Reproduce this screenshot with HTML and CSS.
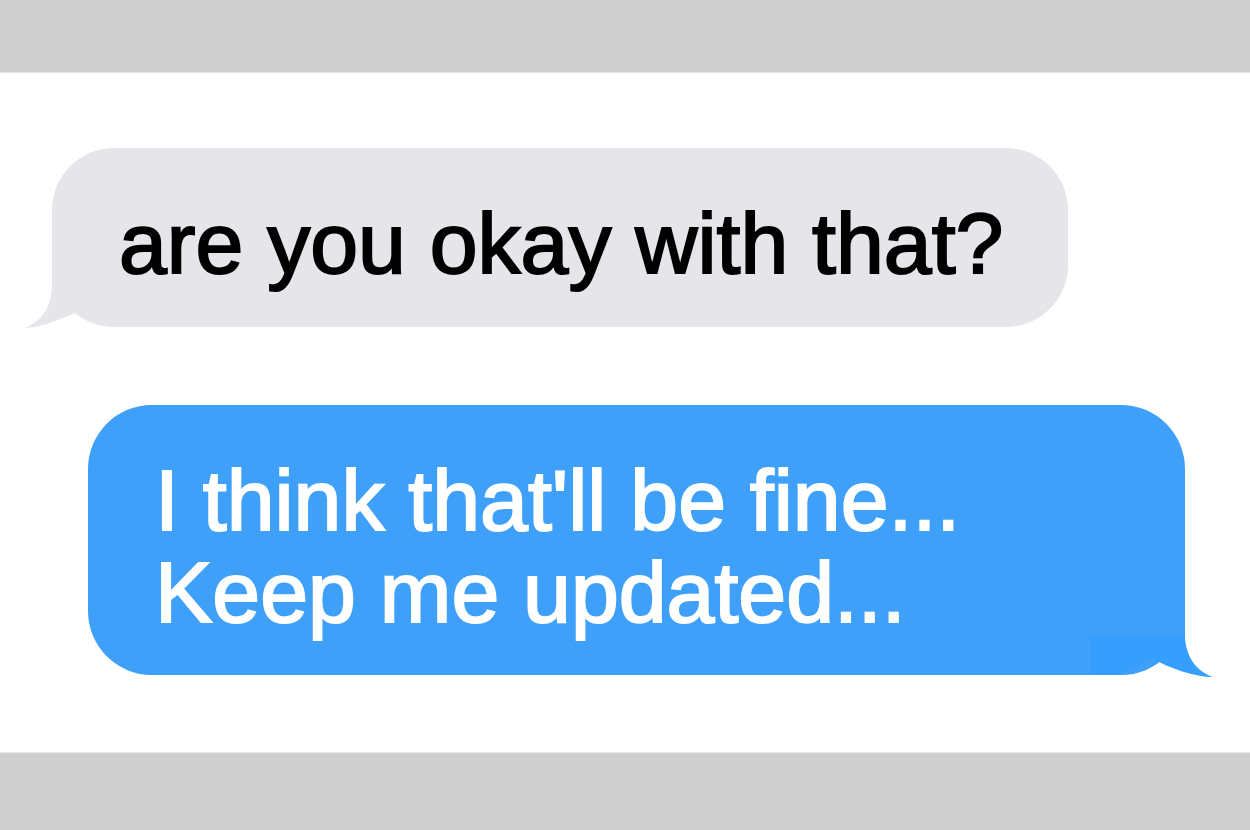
FILE: index.html
```html
<!DOCTYPE html>
<html lang="en">
<head>
    <meta charset="UTF-8">
    <title>Messages</title>
    <link rel="stylesheet" href="styles.css">
</head>
<body>
    <div class="bar bar-top"></div>
    <div class="thread">
        <div class="bubble received">
            are you okay with that?
            <svg class="tail tail-left" width="100" height="60" viewBox="0 0 100 60">
                <path d="M30 0 L30 13 C30 35 22 50 3 58 C20 58 40 48 66 38 C75 48 88 55 100 55 L100 0 Z" fill="#e5e5ea"/>
            </svg>
        </div>
        <div class="bubble sent">
            I think that'll be fine...<br>Keep me updated...
            <svg class="tail tail-right" width="130" height="69" viewBox="0 0 130 69">
                <rect x="0" y="0" width="95" height="27" fill="#3ea0f9"/>
                <path d="M0 26 L95 26 L95 28 C97 48 108 61 123 66 C105 66 80 58 60 46 C50 56 35 64 18 64 L0 64 Z" fill="#369efc"/>
            </svg>
        </div>
    </div>
    <div class="bar bar-bottom"></div>
</body>
</html>
```

FILE: styles.css
```css
:root {
    --band: #cfcfcf;
    --gray-bubble: #e5e5ea;
    --blue-bubble: #3ea0f9;
}
body {
    margin: 0;
    padding: 0;
    background: #ffffff;
    font-family: "Liberation Sans", Arial, sans-serif;
    overflow: hidden;
}
.bar {
    background-color: var(--band);
}
.bar-top {
    height: 73px;
    border-bottom: 1px solid #e6e6e6;
    box-sizing: border-box;
}
.bar-bottom {
    height: 78px;
    border-top: 1px solid #e8e8e8;
    box-sizing: border-box;
}
.thread {
    height: 679px;
    box-sizing: border-box;
    padding-top: 75px;
    display: flex;
    flex-direction: column;
    align-items: flex-start;
    gap: 78px;
}
.bubble {
    position: relative;
    box-sizing: border-box;
    font-size: 86px;
    line-height: 92px;
    padding: 49px 0 38px 67px;
    -webkit-text-stroke: 2px currentColor;
}
.received {
    margin-left: 52px;
    width: 1016px;
    height: 179px;
    background-color: var(--gray-bubble);
    color: #000000;
    border-radius: 62px;
}
.sent {
    margin-left: 88px;
    width: 1097px;
    height: 270px;
    background-color: var(--blue-bubble);
    color: #ffffff;
    border-radius: 64px;
}
.tail {
    position: absolute;
    display: block;
}
.tail-left {
    left: -30px;
    bottom: -3px;
}
.tail-right {
    left: 1002px;
    bottom: -5px;
}
```
